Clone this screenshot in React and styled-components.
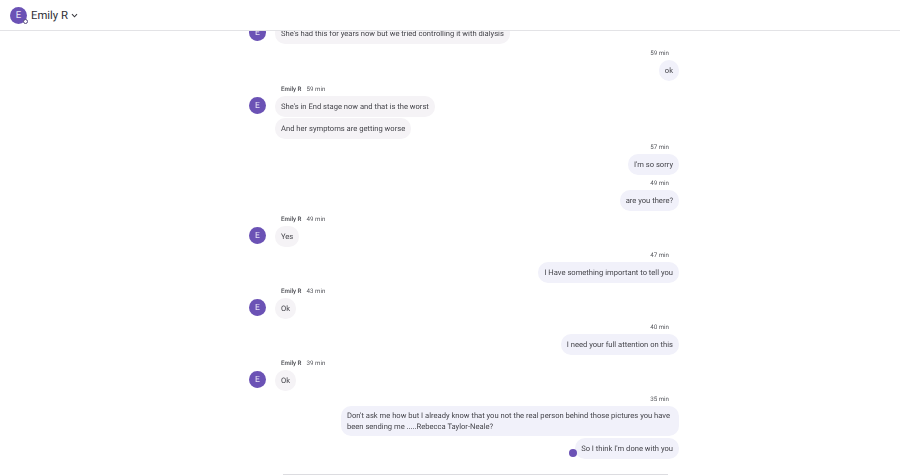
import React from 'react';
import styled, { createGlobalStyle } from 'styled-components';

const GlobalStyle = createGlobalStyle`
  html, body {
    margin: 0;
    height: 100%;
    background: #fff;
    overflow: hidden;
  }
  body {
    font-family: 'Roboto', 'Liberation Sans', sans-serif;
    color: #3c3c43;
    text-rendering: geometricPrecision;
  }
`;

const Page = styled.div`
  width: 900px;
  height: 475px;
  display: flex;
  flex-direction: column;
  overflow: hidden;
  opacity: 0.999;
`;

const Header = styled.header`
  flex: none;
  height: 31px;
  display: flex;
  align-items: center;
  padding-left: 10px;
  box-sizing: border-box;
  border-bottom: 1px solid #e3e3e6;
  position: relative;
  z-index: 1;
  background: #fff;
`;

const HeaderAvatar = styled.div`
  width: 17px;
  height: 17px;
  border-radius: 50%;
  background: #6b52b5;
  color: #e9e4f7;
  font-size: 9.5px;
  display: flex;
  align-items: center;
  justify-content: center;
  position: relative;
  margin-right: 4px;
`;

const StatusDot = styled.span`
  position: absolute;
  right: -1px;
  bottom: 0;
  width: 3px;
  height: 3px;
  border: 1px solid #55487f;
  border-radius: 50%;
  background: #fff;
`;

const HeaderName = styled.span`
  font-size: 11.3px;
  color: #2f3036;
  margin-right: 2px;
`;

const Scroller = styled.main`
  flex: 1;
  overflow: hidden;
`;

const Thread = styled.div`
  width: 430px;
  margin: -8px 0 0 249px;
  display: flex;
  flex-direction: column;
`;

const Incoming = styled.section`
  display: grid;
  grid-template-columns: 17px 1fr;
  column-gap: 9px;
  margin-bottom: ${(p) => p.$after || 0}px;
`;

const Avatar = styled.div`
  width: 17px;
  height: 17px;
  border-radius: 50%;
  background: #6b52b5;
  color: #e9e4f7;
  font-size: 8.5px;
  display: flex;
  align-items: center;
  justify-content: center;
  margin-top: ${(p) => p.$top || 0}px;
`;

const Column = styled.div`
  display: flex;
  flex-direction: column;
  align-items: flex-start;
  gap: 1px;
`;

const Meta = styled.div`
  height: 9px;
  line-height: 9px;
  font-size: 6.2px;
  color: #55565c;
  display: flex;
  gap: 5px;
  padding-left: 6px;
  margin-bottom: 1px;
`;

const Name = styled.span`
  font-weight: 500;
  color: #45464c;
`;

const Bubble = styled.div`
  box-sizing: border-box;
  min-height: 21px;
  padding: ${(p) => (p.$wrapped ? '4px 6px' : '5px 6px')};
  border-radius: 10px;
  font-size: 7.6px;
  line-height: 11px;
  color: #45454b;
  background: ${(p) => (p.$mine ? '#f1f1fa' : '#f5f3f6')};
  max-width: 338px;
`;

const Outgoing = styled.section`
  display: flex;
  flex-direction: column;
  align-items: flex-end;
  gap: 2px;
  margin-bottom: ${(p) => p.$after || 0}px;
`;

const Time = styled.div`
  height: 9px;
  line-height: 9px;
  font-size: 6.2px;
  color: #55565c;
  padding-right: 10px;
`;

const LastRow = styled.div`
  display: flex;
  align-items: flex-end;
`;

const ReadMark = styled.div`
  width: 8px;
  height: 8px;
  border-radius: 50%;
  background: #6b52b5;
  margin: 0 -2px 2px 0;
  position: relative;
  z-index: 1;
`;

const Divider = styled.div`
  height: 1px;
  background: #dcdce0;
  margin: 15px 11px 0 34px;
`;

function Chevron() {
  return (
    <svg width="9" height="9" viewBox="0 0 10 10" fill="none">
      <path d="M2.2 3.6 L5 6.4 L7.8 3.6" stroke="#3a3a40" strokeWidth="1.2" />
    </svg>
  );
}

const thread = [
  { from: 'them', noMeta: true, texts: ["She's had this for years now but we tried controlling it with dialysis"], after: 5 },
  { from: 'me', time: '59 min', texts: ['ok'], after: 4 },
  { from: 'them', time: '59 min', texts: ["She's in End stage now and that is the worst", 'And her symptoms are getting worse'], after: 4 },
  { from: 'me', time: '57 min', texts: ["I'm so sorry"], after: 4 },
  { from: 'me', time: '49 min', texts: ['are you there?'], after: 4 },
  { from: 'them', time: '49 min', texts: ['Yes'], after: 4 },
  { from: 'me', time: '47 min', texts: ['I Have something important to tell you'], after: 4 },
  { from: 'them', time: '43 min', texts: ['Ok'], after: 4 },
  { from: 'me', time: '40 min', texts: ['I need your full attention on this'], after: 4 },
  { from: 'them', time: '39 min', texts: ['Ok'], after: 4 },
];

export default function App() {
  return (
    <Page>
      <GlobalStyle />
      <Header>
        <HeaderAvatar>
          E
          <StatusDot />
        </HeaderAvatar>
        <HeaderName>Emily R</HeaderName>
        <Chevron />
      </Header>
      <Scroller>
        <Thread>
          {thread.map((item, i) =>
            item.from === 'them' ? (
              <Incoming key={i} $after={item.after}>
                <Avatar $top={item.noMeta ? 1 : 12}>E</Avatar>
                <Column>
                  {!item.noMeta && (
                    <Meta>
                      <Name>Emily R</Name>
                      <span>{item.time}</span>
                    </Meta>
                  )}
                  {item.texts.map((t) => (
                    <Bubble key={t}>{t}</Bubble>
                  ))}
                </Column>
              </Incoming>
            ) : (
              <Outgoing key={i} $after={item.after}>
                <Time>{item.time}</Time>
                {item.texts.map((t) => (
                  <Bubble key={t} $mine>
                    {t}
                  </Bubble>
                ))}
              </Outgoing>
            )
          )}
          <Outgoing>
            <Time>35 min</Time>
            <Bubble $mine $wrapped>
              Don't ask me how but I already know that you not the real person behind those pictures you have been sending me .....Rebecca Taylor-Neale?
            </Bubble>
            <LastRow>
              <ReadMark />
              <Bubble $mine>So I think I'm done with you</Bubble>
            </LastRow>
          </Outgoing>
          <Divider />
        </Thread>
      </Scroller>
    </Page>
  );
}
